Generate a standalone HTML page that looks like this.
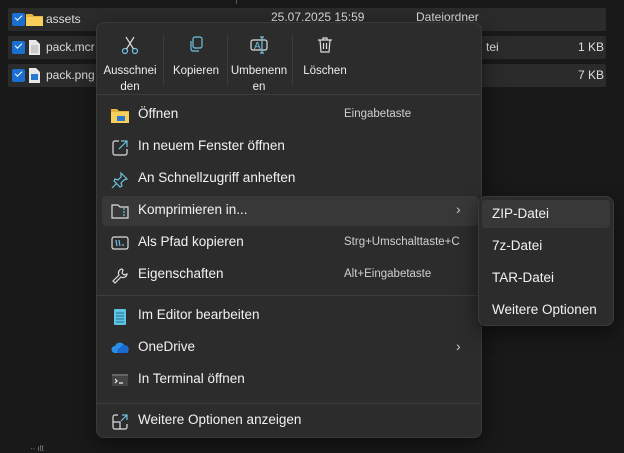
<!DOCTYPE html><html><head><meta charset="utf-8"><style>
*{margin:0;padding:0;box-sizing:border-box}
body{width:624px;height:450px;background:#191919;font-family:"Segoe UI","Liberation Sans",sans-serif;color:#fff;position:relative;overflow:hidden;font-size:13px}
.row{position:absolute;left:8px;width:598px;height:23px;background:#2b2b2b;border-radius:2px}
.cb{position:absolute;left:4px;top:5px;width:13px;height:13px;background:#1a6fd0;border-radius:2px}
.cb:after{content:"";position:absolute;left:3px;top:2px;width:6px;height:3px;border-left:1.5px solid #fff;border-bottom:1.5px solid #fff;transform:rotate(-45deg)}
.t{position:absolute;font-size:12px;color:#ddd;top:4px}
.menu{position:absolute;left:96px;top:22px;width:386px;height:416px;background:#2c2c2c;border:1px solid #3a3a3a;border-radius:8px;box-shadow:0 6px 20px rgba(0,0,0,.5)}
.tb{position:absolute;top:8px;height:64px;text-align:center;font-size:11.5px;line-height:16px;color:#eee}
.tb svg{display:block;margin:4px auto 8px}
.vs{position:absolute;top:12px;width:1px;height:50px;background:#3c3c3c}
.sep{position:absolute;left:0;width:384px;height:1px;background:#3d3d3d}
.it{position:absolute;left:5px;width:376px;height:30px;border-radius:4px}
.it .l{position:absolute;left:36px;top:6px;font-size:13.5px;color:#f2f2f2}
.it .r{position:absolute;left:242px;top:8px;font-size:11.5px;color:#d0d0d0}
.it svg{position:absolute;left:9px;top:7px}
.sub{position:absolute;left:478px;top:196px;width:136px;height:130px;background:#2c2c2c;border:1px solid #3a3a3a;border-radius:8px;box-shadow:0 6px 20px rgba(0,0,0,.5)}
.si{position:absolute;left:3px;width:128px;height:28px;border-radius:4px;font-size:13.5px;color:#f2f2f2;padding:6px 0 0 10px}
</style></head><body>
<div style="position:absolute;left:236px;top:0;width:1px;height:4px;background:#555"></div>
<div class="row" style="top:8px"><div class="cb"></div>
<svg style="position:absolute;left:18px;top:4px" width="17" height="14"><path d="M0 2h6l2 2h9v10H0z" fill="#e8b33c"/><path d="M0 5h17v9H0z" fill="#f7cf5a"/></svg>
<span class="t" style="left:38px">assets</span><span class="t" style="left:263px;top:2px">25.07.2025 15:59</span><span class="t" style="left:408px;top:2px">Dateiordner</span></div>
<div class="row" style="top:36px"><div class="cb"></div>
<svg style="position:absolute;left:21px;top:4px" width="11" height="15"><path d="M0 0h7l4 4v11H0z" fill="#e8e8e8"/><path d="M2 6h7M2 8h7M2 10h7M2 12h7" stroke="#999" stroke-width=".7"/></svg>
<span class="t" style="left:38px">pack.mcr</span><span class="t" style="left:478px">tei</span><span class="t" style="left:570px">1 KB</span></div>
<div class="row" style="top:64px"><div class="cb"></div>
<svg style="position:absolute;left:21px;top:4px" width="11" height="15"><path d="M0 0h7l4 4v11H0z" fill="#e8e8e8"/><rect x="2" y="6" width="7" height="6" fill="#2a78d0"/></svg>
<span class="t" style="left:38px">pack.png</span><span class="t" style="left:570px">7 KB</span></div>
<div style="position:absolute;left:30px;top:444px;width:30px;height:6px;color:#888;font-size:8px">·· ılt</div>

<div class="menu">
<div class="tb" style="left:4px;width:58px"><svg width="20" height="20" fill="none" stroke="#6fc3e0" stroke-width="1.2"><circle cx="5" cy="16" r="2.5"/><circle cx="15" cy="16" r="2.5"/><path d="M6.5 14L14 2M13.5 14L6 2" stroke="#ddd"/></svg>Ausschnei<br>den</div>
<div class="vs" style="left:66px"></div>
<div class="tb" style="left:70px;width:58px"><svg width="20" height="20" fill="none" stroke="#6fc3e0" stroke-width="1.2"><rect x="7" y="2" width="9" height="11" rx="2"/><path d="M5 6v8a2 2 0 0 0 2 2h6"/></svg>Kopieren</div>
<div class="vs" style="left:130px"></div>
<div class="tb" style="left:132px;width:60px"><svg width="20" height="20" fill="none" stroke="#ddd" stroke-width="1.2"><rect x="2" y="5" width="16" height="10" rx="2"/><text x="5" y="14" font-size="10" fill="#6fc3e0" stroke="none" font-family="Liberation Sans">A</text><path d="M13 2v16M11 2h4M11 18h4" stroke="#6fc3e0"/></svg>Umbenenn<br>en</div>
<div class="vs" style="left:195px"></div>
<div class="tb" style="left:198px;width:60px"><svg width="20" height="20" fill="none" stroke="#ddd" stroke-width="1.2"><path d="M3 5h14M8 5V3h4v2M5 5l1 12h8l1-12M8.5 8v6M11.5 8v6"/></svg>Löschen</div>
<div class="sep" style="top:71px"></div>
<div class="it" style="top:77px"><svg width="18" height="16"><path d="M0 2h6l2 2h10v12H0z" fill="#e8b33c"/><path d="M0 5h18v11H0z" fill="#f7cf5a"/><rect x="6" y="9" width="8" height="5" fill="#2a78d0"/></svg><span class="l">Öffnen</span><span class="r">Eingabetaste</span></div>
<div class="it" style="top:109px"><svg width="18" height="18" fill="none" stroke="#ddd" stroke-width="1.2"><path d="M8 2H4a2 2 0 0 0-2 2v10a2 2 0 0 0 2 2h10a2 2 0 0 0 2-2v-4"/><path d="M10 2h6v6M16 2L8 10" stroke="#6fc3e0"/></svg><span class="l">In neuem Fenster öffnen</span></div>
<div class="it" style="top:141px"><svg width="18" height="18" fill="none" stroke="#6fc3e0" stroke-width="1.2"><path d="M10 2l6 6-3 1-3 3 1 3-2 1-6-6 1-2 3 1 3-3z M6 12l-5 5"/></svg><span class="l">An Schnellzugriff anheften</span></div>
<div class="it" style="top:173px;background:#383838"><svg width="18" height="16" fill="none" stroke="#ddd" stroke-width="1.2"><path d="M1 2h6l2 2h8v11H1z"/><path d="M13 5v9" stroke="#6fc3e0" stroke-dasharray="2 1"/></svg><span class="l">Komprimieren in...</span><span style="position:absolute;left:354px;top:5px;color:#ccc;font-size:14px">›</span></div>
<div class="it" style="top:205px"><svg width="18" height="16" fill="none" stroke="#6fc3e0" stroke-width="1.2"><rect x="1" y="2" width="16" height="12" rx="2" stroke="#ddd"/><path d="M5 5l1 6M8 5l1 6M11 10h2"/></svg><span class="l">Als Pfad kopieren</span><span class="r">Strg+Umschalttaste+C</span></div>
<div class="it" style="top:237px"><svg width="18" height="18" fill="none" stroke="#ddd" stroke-width="1.2"><path d="M11 2a4 4 0 0 0-3 6L2 14l2 2 6-6a4 4 0 0 0 6-3l-3 1-2-2 1-3z"/></svg><span class="l">Eigenschaften</span><span class="r">Alt+Eingabetaste</span></div>
<div class="sep" style="top:272px"></div>
<div class="it" style="top:278px"><svg width="18" height="18"><rect x="3" y="1" width="12" height="16" rx="1" fill="#5ec4e6"/><path d="M5 5h8M5 8h8M5 11h8M5 14h8" stroke="#1d6e90" stroke-width="1"/></svg><span class="l">Im Editor bearbeiten</span></div>
<div class="it" style="top:310px"><svg width="18" height="14"><path d="M4 13a3.5 3.5 0 0 1 0-7 5 5 0 0 1 9-1 4 4 0 0 1 1 8z" fill="#2b8ee8"/><path d="M7 13a3 3 0 0 1 2-5 4 4 0 0 1 8 2 2 2 0 0 1-1 3z" fill="#1a6bd0"/></svg><span class="l">OneDrive</span><span style="position:absolute;left:354px;top:5px;color:#ccc;font-size:14px">›</span></div>
<div class="it" style="top:342px"><svg width="18" height="16"><rect x="1" y="2" width="16" height="12" fill="#444"/><rect x="1" y="2" width="16" height="2" fill="#666"/><path d="M4 7l2 2-2 2M8 11h4" stroke="#eee" fill="none" stroke-width="1.2"/></svg><span class="l">In Terminal öffnen</span></div>
<div class="sep" style="top:380px"></div>
<div class="it" style="top:383px"><svg width="18" height="18" fill="none" stroke="#ddd" stroke-width="1.2"><path d="M7 2H4a2 2 0 0 0-2 2v10a2 2 0 0 0 2 2h10a2 2 0 0 0 2-2v-3M2 9h7v7"/><path d="M11 2h5v5M16 2l-6 6" stroke="#6fc3e0"/></svg><span class="l">Weitere Optionen anzeigen</span></div>
</div>
<div class="sub">
<div class="si" style="top:3px;background:#383838">ZIP-Datei</div>
<div class="si" style="top:35px">7z-Datei</div>
<div class="si" style="top:67px">TAR-Datei</div>
<div class="si" style="top:99px">Weitere Optionen</div>
</div>
</body></html>
